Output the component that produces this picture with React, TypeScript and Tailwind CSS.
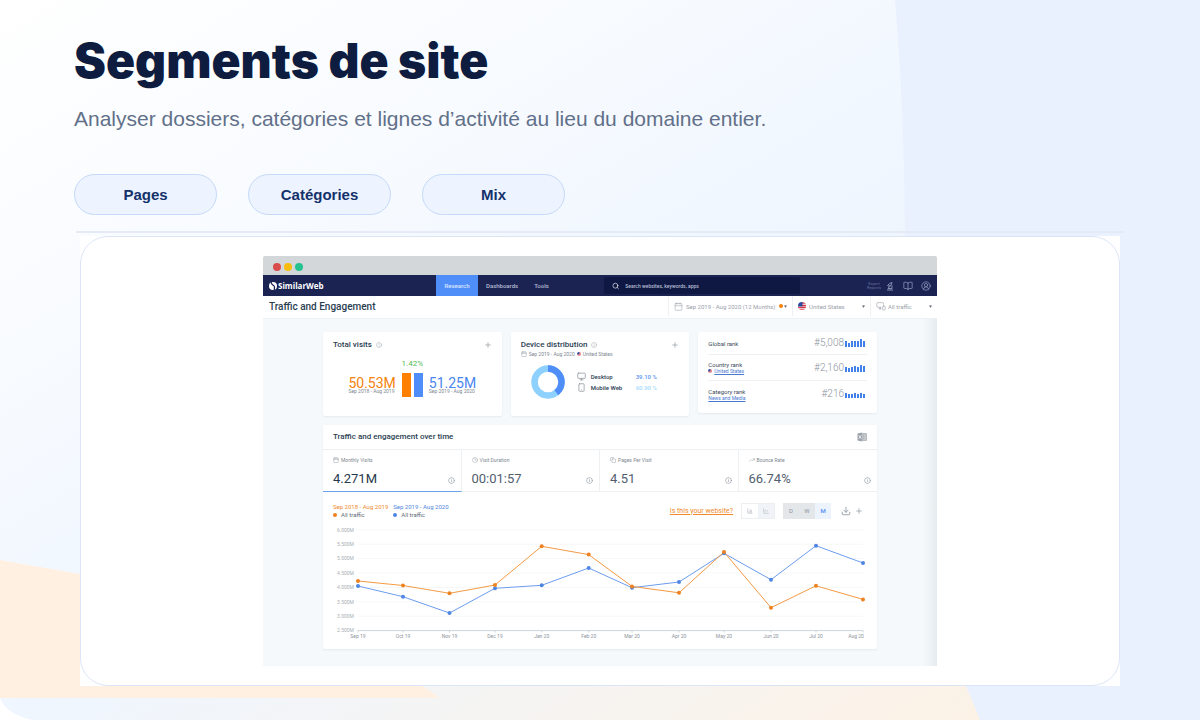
import type { ReactNode } from 'react';
import {
  BookOpen, Calendar, ChartColumn, ChartLine, CircleUserRound, Clock, Copy, Download,
  Info, Monitor, MonitorSmartphone, Plus, Search, Smartphone, TrendingUp,
} from 'lucide-react';

const segments = ['Pages', 'Catégories', 'Mix'];

const ranks = [
  { name: 'Global rank', link: '', flag: false, value: '#5,008', bars: [6, 4, 6, 6, 6, 8, 6] },
  { name: 'Country rank', link: 'United States', flag: true, value: '#2,160', bars: [5, 4, 5, 6, 5, 7, 6] },
  { name: 'Category rank', link: 'News and Media', flag: false, value: '#216', bars: [5, 4, 4, 5, 4, 5, 4] },
];

const metrics = [
  { label: 'Monthly Visits', value: '4.271M', icon: Calendar },
  { label: 'Visit Duration', value: '00:01:57', icon: Clock },
  { label: 'Pages Per Visit', value: '4.51', icon: Copy },
  { label: 'Bounce Rate', value: '66.74%', icon: TrendingUp },
];

const months = [
  { name: 'Sep 19', x: 35, last: 59, current: 64 },
  { name: 'Oct 19', x: 80, last: 63.5, current: 74.7 },
  { name: 'Nov 19', x: 126.5, last: 71.3, current: 91 },
  { name: 'Dec 19', x: 172, last: 63, current: 66.3 },
  { name: 'Jan 20', x: 218.7, last: 24.3, current: 63.3 },
  { name: 'Feb 20', x: 265.7, last: 32.6, current: 46 },
  { name: 'Mar 20', x: 309, last: 64.4, current: 65.7 },
  { name: 'Apr 20', x: 356, last: 70.8, current: 60 },
  { name: 'May 20', x: 401, last: 30, current: 31.3 },
  { name: 'Jun 20', x: 448, last: 85.7, current: 57.7 },
  { name: 'Jul 20', x: 493, last: 63.8, current: 23.7 },
  { name: 'Aug 20', x: 540, last: 77.4, current: 41 },
];

const scale = ['6.000M', '5.500M', '5.000M', '4.500M', '4.000M', '3.500M', '3.000M', '2.500M'];

function Backdrop() {
  return (
    <svg className="absolute inset-0 -z-10 h-full w-full" viewBox="0 0 1200 720" preserveAspectRatio="none" aria-hidden="true">
      <defs>
        <linearGradient id="page" x1="0" y1="0" x2="1" y2="1">
          <stop offset="0" stopColor="#ffffff" />
          <stop offset="0.25" stopColor="#f8fbff" />
          <stop offset="0.5" stopColor="#eff6ff" />
          <stop offset="1" stopColor="#fff1e0" />
        </linearGradient>
      </defs>
      <rect width="1200" height="720" fill="url(#page)" />
      <path d="M0 698Q6 714 32 720H0Z" fill="#ffffff" />
      <path d="M895 0C900 60 905 140 905 240C906 400 915 560 966 686L980 720H1200V0Z" fill="#e9f0fe" />
      <path d="M0 560L80 574C220 600 350 640 423 686L440 698H0Z" fill="#fff0e2" />
    </svg>
  );
}

function Flag({ className }: { className: string }) {
  return (
    <svg className={className} viewBox="0 0 16 16" aria-hidden="true">
      <clipPath id="round"><circle cx="8" cy="8" r="8" /></clipPath>
      <g clipPath="url(#round)">
        <path fill="#f4f4f6" d="M0 0h16v16H0z" />
        <path stroke="#d8394b" strokeWidth="3" d="M8 2h8M8 7h8M0 11h16M0 16h16" />
        <path fill="#2b4aa0" d="M0 0h9v9H0z" />
      </g>
    </svg>
  );
}

function Caret() {
  return (
    <svg className="h-[3px] w-[3px] shrink-0" viewBox="0 0 8 6" aria-hidden="true">
      <path fill="#59636f" d="M0 0h8L4 6z" />
    </svg>
  );
}

function Card({ children }: { children: ReactNode }) {
  return <section className="rounded-xs bg-white shadow-[0_1px_2px_rgba(30,60,90,0.08)]">{children}</section>;
}

function NavBar() {
  return (
    <nav className="flex h-[21px] items-stretch bg-[#1a2352] text-[6px] font-medium text-[#b6bdd3]">
      <a href="#" className="flex w-[173px] items-center gap-px pl-1.5 text-white">
        <svg className="h-2 w-2" viewBox="0 0 16 16" aria-hidden="true">
          <circle cx="8" cy="8" r="8" fill="#ffffff" />
          <path d="M5 0C2 5 11 6 11 10 11 12 10 14 11 16" fill="none" stroke="#1a2352" strokeWidth="2.5" />
        </svg>
        <span className="font-['Open_Sans',sans-serif] text-[8px] font-bold">SimilarWeb</span>
      </a>
      <a href="#" className="flex w-[42px] items-center justify-center bg-[#4f8df9] text-[#dbe8ff]">Research</a>
      <a href="#" className="ml-2 flex items-center">Dashboards</a>
      <a href="#" className="ml-4 flex items-center">Tools</a>
      <label className="my-0.5 mr-auto ml-[55px] flex w-[196px] items-center gap-1.5 rounded-xs bg-[#0e1842] pl-2">
        <Search className="h-2 w-2 text-white" />
        <input aria-label="Search" placeholder="Search websites, keywords, apps" className="h-full w-full bg-transparent text-[5px] placeholder:text-[#b6bdd3] outline-none" />
      </label>
      <div className="flex items-center pr-1.5 text-[#8790b4]">
        <span className="mr-1 w-3.5 text-center text-[4px] leading-[4px] font-normal text-[#69729b]">Expert Reports</span>
        <svg className="mr-2 h-2.5 w-2.5" viewBox="0 0 20 20" fill="none" stroke="currentColor" strokeWidth="2" aria-hidden="true">
          <path d="M4 18h12M6 15h8M7 12c4-1 6-3 7-9L9 5 5 9l3 1 4-2M8 12l-2 3m8 0V9" />
        </svg>
        <BookOpen className="mr-2 h-2.5 w-2.5" />
        <CircleUserRound className="h-2.5 w-2.5" />
      </div>
    </nav>
  );
}

const selectClass = 'appearance-none bg-transparent outline-none';

function FilterBar() {
  return (
    <header className="flex h-[23px] items-stretch border-b border-[#edf1f4] bg-white pb-0.5 text-[6px] text-[#9aa2ab]">
      <h2 className="flex grow items-center pl-1.5 text-[10px] font-medium text-[#2a3e52]">Traffic and Engagement</h2>
      <label className="flex w-[124px] items-center border-l border-[#edf1f4] px-[5px]">
        <Calendar className="mr-[3px] h-[9px] w-[9px] shrink-0" strokeWidth={1.5} />
        <select aria-label="Period" className={selectClass}><option>Sep 2019 - Aug 2020 (12 Months)</option></select>
        <span className="mr-px ml-auto h-1 w-1 shrink-0 rounded-full bg-[#f5820b]" />
        <Caret />
      </label>
      <label className="flex w-[78px] items-center border-l border-[#edf1f4] px-[5px]">
        <Flag className="mr-[3px] h-2 w-2 shrink-0" />
        <select aria-label="Country" className={selectClass}><option>United States</option></select>
        <span className="ml-auto" />
        <Caret />
      </label>
      <label className="flex w-[67px] items-center border-l border-[#edf1f4] px-[5px]">
        <MonitorSmartphone className="mr-0.5 h-2.5 w-2.5 shrink-0" strokeWidth={1.5} />
        <select aria-label="Traffic" className={selectClass}><option>All traffic</option></select>
        <span className="ml-auto" />
        <Caret />
      </label>
    </header>
  );
}

function CardTitle({ title }: { title: string }) {
  return (
    <div className="flex h-3 items-center gap-1">
      <h3 className="text-[8px] font-medium text-[#2a3e52]">{title}</h3>
      <Info className="h-1.5 w-1.5 text-[#a4abb3]" />
      <button aria-label={`Add ${title}`} className="ml-auto text-[#8f979f]"><Plus className="h-2 w-2" /></button>
    </div>
  );
}

function TotalVisits() {
  return (
    <Card>
      <div className="h-[84px] px-2.5 pt-[7px]">
        <CardTitle title="Total visits" />
        <p className="mt-[7px] text-center text-[8px] leading-3 text-[#57bd51]">1.42%</p>
        <div className="mt-[3px] flex items-center justify-center gap-1.5">
          <div className="text-[#f5820b]">
            <p className="text-sm leading-[12px]">50.53M</p>
            <p className="text-[5px] leading-[5px] text-[#7d8791]">Sep 2018 - Aug 2019</p>
          </div>
          <div className="flex gap-[3px]">
            <span className="h-6 w-[9px] bg-[#ff8000]" />
            <span className="h-6 w-[9px] bg-[#4f8df9]" />
          </div>
          <div className="text-[#4a86ee]">
            <p className="text-sm leading-[12px]">51.25M</p>
            <p className="text-[5px] leading-[5px] text-[#7d8791]">Sep 2019 - Aug 2020</p>
          </div>
        </div>
      </div>
    </Card>
  );
}

function DeviceDistribution() {
  return (
    <Card>
      <div className="h-[84px] px-2.5 pt-[7px]">
        <CardTitle title="Device distribution" />
        <p className="flex items-center gap-0.5 text-[5px] leading-[6px] text-[#7d8791]">
          <Calendar className="h-1.5 w-1.5" strokeWidth={1.5} /> Sep 2019 - Aug 2020 <Flag className="h-1 w-1" /> United States
        </p>
        <div className="mt-2 ml-2.5 flex items-center gap-3">
          <svg className="h-[34px] w-[34px] -rotate-90" viewBox="0 0 34 34" aria-hidden="true">
            <circle cx="17" cy="17" r="13.5" fill="none" stroke="#8ed1ff" strokeWidth="6.5" />
            <circle cx="17" cy="17" r="13.5" fill="none" stroke="#4f8df9" strokeWidth="6.5" strokeDasharray="33.2 90" />
          </svg>
          <dl className="grid grid-cols-[14px_45px_auto] items-center gap-y-px text-[6px] leading-[10px] font-medium text-[#2a3e52]">
            <Monitor className="h-[9px] w-[9px] text-[#8c949c]" strokeWidth={2} />
            <dt>Desktop</dt>
            <dd className="text-[#5b95f5]">39.10 %</dd>
            <Smartphone className="h-[9px] w-[9px] text-[#8c949c]" strokeWidth={2} />
            <dt>Mobile Web</dt>
            <dd className="text-[#a5dbff]">60.90 %</dd>
          </dl>
        </div>
      </div>
    </Card>
  );
}

function Ranks() {
  return (
    <Card>
      <ul className="h-[81px] divide-y divide-[#edf1f4] px-2.5">
        {ranks.map((r) => (
          <li key={r.name} className="flex h-[23px] items-center not-first:h-[26px]">
            <div className="text-[#3c4b5a]">
              <p className="text-[6px] leading-[7px]">{r.name}</p>
              {r.link && (
                <p className="flex items-center gap-0.5 text-[5px] leading-[6px]">
                  {r.flag && <Flag className="h-1 w-1" />}
                  <a href="#" className="text-[#4a78d0] underline">{r.link}</a>
                </p>
              )}
            </div>
            <span className="ml-auto text-[10px] leading-3 font-light text-[#8b939d]">{r.value}</span>
            <span className="mr-0.5 ml-px flex h-2 items-end gap-px">
              {r.bars.map((h, i) => (
                <span key={i} className="w-0.5 bg-[#4080e8]" style={{ height: h }} />
              ))}
            </span>
          </li>
        ))}
      </ul>
    </Card>
  );
}

function Chart() {
  return (
    <svg className="block w-full" viewBox="0 0 554 127" role="img" aria-label="Traffic and engagement over time">
      {scale.map((s, i) => (
        <g key={s}>
          <text x="14" y={9.5 + i * 14.4} fontSize="5" fill="#aab0b6">{s}</text>
          <path d={`M35 ${7.8 + i * 14.4}H540`} stroke={i === 7 ? '#cfd4d9' : '#f6f7f8'} strokeWidth="1" />
        </g>
      ))}
      {months.map((m) => (
        <g key={m.name}>
          <path d={`M${m.x} 108.5v2`} stroke="#cfd4d9" />
          <text x={m.name === 'Aug 20' ? 533 : m.x} y="116" fontSize="5" textAnchor="middle" fill="#8c949c">{m.name}</text>
        </g>
      ))}
      <polyline points={months.map((m) => `${m.x},${m.current}`).join(' ')} fill="none" stroke="#6c9df0" />
      <polyline points={months.map((m) => `${m.x},${m.last}`).join(' ')} fill="none" stroke="#f39a45" />
      {months.map((m) => (
        <g key={m.name}>
          <circle cx={m.x} cy={m.current} r="2" fill="#4f86e3" />
          <circle cx={m.x} cy={m.last} r="2" fill="#ee8120" />
        </g>
      ))}
    </svg>
  );
}

function OverTime() {
  return (
    <Card>
      <div className="flex h-6 items-center justify-between px-2.5">
        <h3 className="text-[8px] font-medium text-[#2a3e52]">Traffic and engagement over time</h3>
        <button aria-label="Export to Excel">
          <svg className="h-2.5 w-2.5" viewBox="0 0 20 20" aria-hidden="true">
            <path fill="#9aa1a8" d="M1 3l10-2v18L1 17z" />
            <path fill="none" stroke="#ffffff" strokeWidth="1.6" d="M3.5 6.5l5 7M8.5 6.5l-5 7" />
            <path fill="#c3c8cd" stroke="#9aa1a8" strokeWidth="1.2" d="M12 3h7v14h-7z" />
          </svg>
        </button>
      </div>
      <div className="grid grid-cols-4 divide-x divide-[#edf1f4] border-t border-[#edf1f4]">
        {metrics.map((m, i) => (
          <button key={m.label} className={`flex h-[42px] flex-col border-b px-2.5 pt-[7px] text-left ${i === 0 ? 'border-b-[#6ba3ea] text-[#26384b]' : 'border-b-[#edf1f4] text-[#52606e]'}`}>
            <span className="flex items-center gap-0.5 text-[5px] leading-[6px] text-[#7d8791]">
              <m.icon className="h-1.5 w-1.5" strokeWidth={1.5} /> {m.label}
            </span>
            <span className="mt-2 flex w-full items-center justify-between text-[13px] leading-[16px]">
              {m.value}
              <Info className="mt-0.5 -mr-1 h-[7px] w-[7px] text-[#8c949c]" />
            </span>
          </button>
        ))}
      </div>
      <div className="flex h-[30px] items-center px-2.5 pt-[7px] text-[6px] leading-[8px] text-[#5f6b77]">
        <div className="mr-[5px]">
          <p className="text-[#f08a2c]">Sep 2018 - Aug 2019</p>
          <p className="flex items-center gap-1"><span className="h-1 w-1 rounded-full bg-[#ee8120]" />All traffic</p>
        </div>
        <div>
          <p className="text-[#4f86e3]">Sep 2019 - Aug 2020</p>
          <p className="flex items-center gap-1"><span className="h-1 w-1 rounded-full bg-[#4f86e3]" />All traffic</p>
        </div>
        <a href="#" className="mr-2 ml-auto text-[7px] text-[#f08a2c] underline">Is this your website?</a>
        <div className="mr-2 flex h-4 border border-[#eceff2] text-[#a4abb3]">
          <button aria-label="Column chart" className="flex w-4 items-center justify-center"><ChartColumn className="h-1.5 w-1.5" /></button>
          <button aria-label="Line chart" className="flex w-4 items-center justify-center bg-[#f0f4f9]"><ChartLine className="h-1.5 w-1.5" /></button>
        </div>
        <div className="mr-2.5 flex h-4 bg-[#e4e7ea] text-[#8c949c]">
          <button className="w-4">D</button>
          <button className="w-4">W</button>
          <button className="w-4 bg-[#edf3fc] font-medium text-[#4f8df9]">M</button>
        </div>
        <button aria-label="Download" className="mr-1"><Download className="h-2.5 w-2.5 text-[#8c949c]" /></button>
        <button aria-label="Add chart" className="mr-1"><Plus className="h-2 w-2 text-[#8c949c]" /></button>
      </div>
      <Chart />
    </Card>
  );
}

function Dashboard() {
  return (
    <div className="w-full max-w-[674px] overflow-hidden rounded-t-xs bg-[#f5f9fc] font-[Roboto,sans-serif]">
      <div className="flex h-[19px] items-center gap-[3px] bg-[#d3d7da] pt-0.5 pl-2.5">
        <span className="h-2 w-2 rounded-full bg-[#d94c4c]" />
        <span className="h-2 w-2 rounded-full bg-[#f8bd0c]" />
        <span className="h-2 w-2 rounded-full bg-[#26c28d]" />
      </div>
      <NavBar />
      <FilterBar />
      <div className="bg-linear-to-l from-[#e6ebef] to-[#f5f9fc] to-[14px] px-[60px] pt-[13px] pb-[17px]">
        <div className="grid grid-cols-3 items-start gap-[9px] pb-[9px]">
          <TotalVisits />
          <DeviceDistribution />
          <Ranks />
        </div>
        <OverTime />
      </div>
    </div>
  );
}

export default function App() {
  return (
    <main className="relative isolate min-h-screen overflow-hidden pt-[34px] pb-[34px] font-['Liberation_Sans',Arial,sans-serif]">
      <Backdrop />
      <header className="px-[74px]">
        <h1 className="font-[Inter,sans-serif] text-5xl leading-[54px] font-black text-[#0d1c3f]">Segments de site</h1>
        <p className="mt-[17px] text-[21px] leading-[28px] text-[#627089]">Analyser dossiers, catégories et lignes d’activité au lieu du domaine entier.</p>
        <div className="mt-[41px] flex gap-[31px]">
          {segments.map((s) => (
            <button key={s} className="h-[41px] w-[143px] rounded-full border border-[#c5d9f8] bg-[#edf4ff] pt-px text-[15px] font-bold text-[#14316b]">{s}</button>
          ))}
        </div>
      </header>
      <hr className="mx-[76px] mt-4 mb-[3px] border-t-2 border-[#e4ebf6]" />
      <div className="mx-20 bg-white">
        <div className="flex justify-center rounded-[28px] border border-[#dbe5f7] px-5 pt-[19px] pb-[19px]">
          <Dashboard />
        </div>
      </div>
    </main>
  );
}
